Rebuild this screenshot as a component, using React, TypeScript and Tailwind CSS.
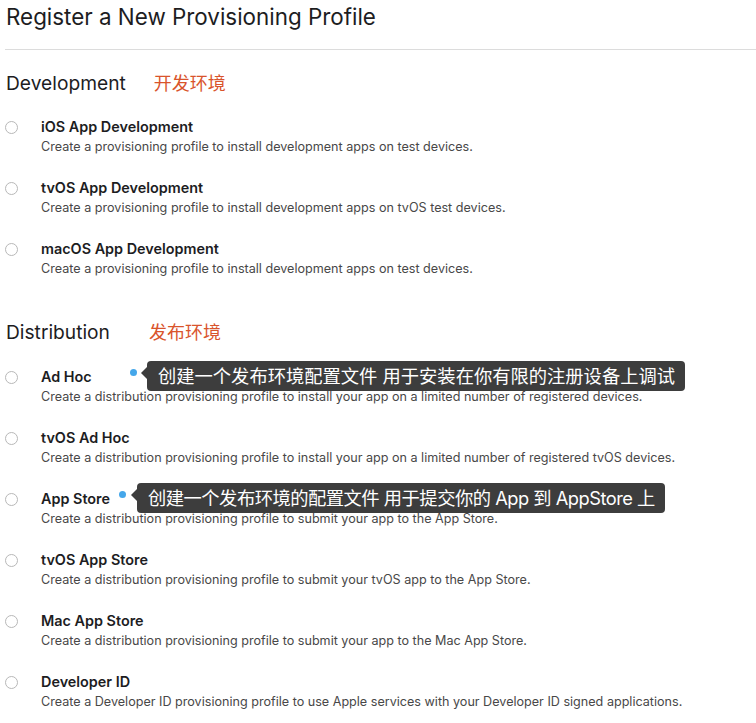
const SANS = "font-['Inter','Noto_Sans_CJK_SC',sans-serif]";

type Profile = {
  title: string;
  desc: string;
  tip?: { text: string; dot: string; box: string; tracking?: string };
};

const DEVELOPMENT: Profile[] = [
  { title: "iOS App Development", desc: "Create a provisioning profile to install development apps on test devices." },
  { title: "tvOS App Development", desc: "Create a provisioning profile to install development apps on tvOS test devices." },
  { title: "macOS App Development", desc: "Create a provisioning profile to install development apps on test devices." },
];

const DISTRIBUTION: Profile[] = [
  {
    title: "Ad Hoc",
    desc: "Create a distribution provisioning profile to install your app on a limited number of registered devices.",
    tip: { text: "创建一个发布环境配置文件 用于安装在你有限的注册设备上调试", dot: "left-[125px]", box: "left-[136px]" },
  },
  { title: "tvOS Ad Hoc", desc: "Create a distribution provisioning profile to install your app on a limited number of registered tvOS devices." },
  {
    title: "App Store",
    desc: "Create a distribution provisioning profile to submit your app to the App Store.",
    tip: {
      text: "创建一个发布环境的配置文件 用于提交你的 App 到 AppStore 上",
      dot: "left-[114px]",
      box: "left-[126px]",
      tracking: "tracking-[-0.5px]",
    },
  },
  { title: "tvOS App Store", desc: "Create a distribution provisioning profile to submit your tvOS app to the App Store." },
  { title: "Mac App Store", desc: "Create a distribution provisioning profile to submit your app to the Mac App Store." },
  { title: "Developer ID", desc: "Create a Developer ID provisioning profile to use Apple services with your Developer ID signed applications." },
];

function Row({ p }: { p: Profile }) {
  return (
    <div className="relative flex items-start">
      <div className="h-[18px] flex items-center">
        <span className="w-[13px] h-[13px] rounded-full border border-[#b8b8b8] bg-white" />
      </div>
      <div className="ml-[23px]">
        <div className="text-[14.4px] leading-[18px] font-semibold text-[#1d1d1f]">{p.title}</div>
        <div className="mt-[3px] text-[12.6px] leading-[16px] text-[#484848]">{p.desc}</div>
      </div>

      {/* annotation bubble */}
      {p.tip && (
        <>
          <span className={`absolute top-[1px] w-[7px] h-[7px] rounded-full bg-[#45a7ea] ${p.tip.dot}`} />
          <div className={`absolute top-[-7px] flex items-center ${p.tip.box}`}>
            <span className="w-0 h-0 border-y-[6px] border-y-transparent border-r-[6px] border-r-[#3d3d3d] -mt-[6px]" />
            <div className={`h-[30px] pl-[11px] pr-[10px] flex items-center rounded-[4px] bg-[#3d3d3d] text-white text-[18.3px] leading-none whitespace-nowrap ${p.tip.tracking ?? ""}`}>
              {p.tip.text}
            </div>
          </div>
        </>
      )}
    </div>
  );
}

function Section({ name, cn, cnGap, rowsTop, items }: { name: string; cn: string; cnGap: string; rowsTop: string; items: Profile[] }) {
  return (
    <div>
      <div className="flex items-baseline h-[24px] pl-[1px]">
        <span className="text-[19.2px] leading-[24px] text-[#1d1d1f]">{name}</span>
        <span className={`text-[18px] leading-[24px] text-[#d9542c] ${cnGap}`}>{cn}</span>
      </div>
      <div className={`flex flex-col gap-[24px] ${rowsTop}`}>
        {items.map(p => <Row key={p.title} p={p} />)}
      </div>
    </div>
  );
}

export default function App() {
  return (
    <div className={`min-h-[723px] bg-white pl-[5px] ${SANS}`}>
      <h1 className="pt-[3px] pl-[1px] text-[22.4px] leading-[28px] font-normal text-[#1d1d1f]">
        Register a New Provisioning Profile
      </h1>
      <div className="mt-[18px] border-t border-[#dcdcdc]" />

      <div className="mt-[21px]">
        <Section name="Development" cn="开发环境" cnGap="ml-[28px]" rowsTop="mt-[23px]" items={DEVELOPMENT} />
      </div>
      <div className="mt-[43px]">
        <Section name="Distribution" cn="发布环境" cnGap="ml-[39px]" rowsTop="mt-[24px]" items={DISTRIBUTION} />
      </div>
    </div>
  );
}
